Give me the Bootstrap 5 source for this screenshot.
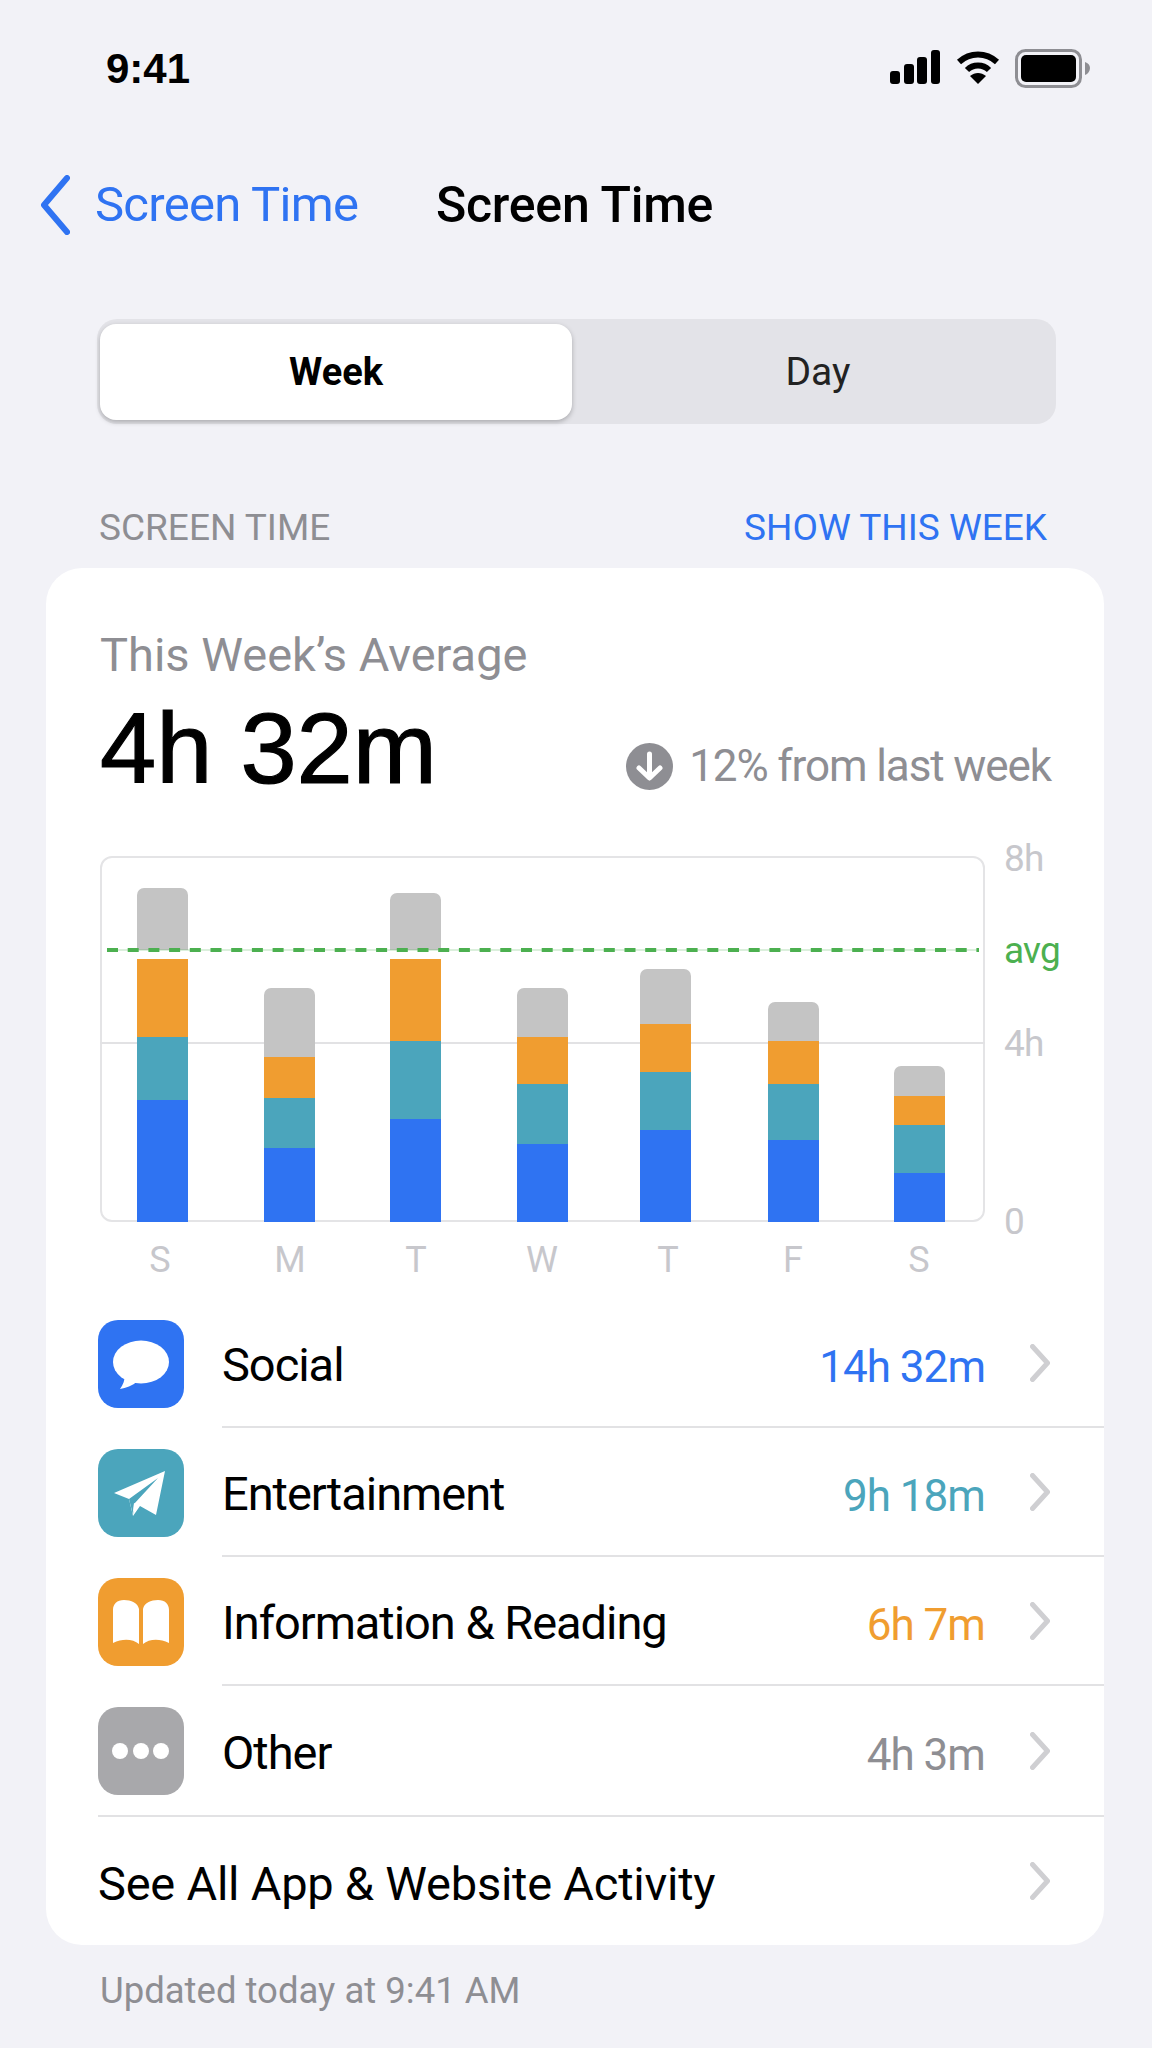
<!DOCTYPE html>
<html lang="en">
<head>
    <meta charset="UTF-8">
    <meta name="viewport" content="width=device-width, initial-scale=1.0">
    <title>Screen Time</title>
    <link href="https://cdn.jsdelivr.net/npm/bootstrap@5.3.0/dist/css/bootstrap.min.css" rel="stylesheet">
    <style>
        body { background: #f2f2f7; font-family: Roboto, "Liberation Sans", sans-serif; color: #000; height: 2048px; overflow: hidden; }
        .status-row { height: 140px; padding: 49px 61px 0 106px; }
        .clock { font-family: "Liberation Sans", sans-serif; font-size: 42px; font-weight: 700; line-height: 40px; }
        .nav-row { height: 130px; padding-left: 40px; }
        .back-text { color: #2f73f2; font-size: 49px; margin-left: 25px; width: 341px; letter-spacing: -.015em; }
        .nav-title { font-size: 50px; font-weight: 500; letter-spacing: -.005em; }
        .seg-box { margin: 49px 96px 0 97px; height: 105px; background: #e3e3e8; border-radius: 20px; padding: 5px 0 4px 3px; }
        .seg-on { width: 472px; background: #fff; border-radius: 16px; box-shadow: 0 2px 5px rgba(0,0,0,.25); font-weight: 700; font-size: 38px; }
        .seg-off { font-size: 39px; color: #222; padding-left: 8px; }
        .sect-head { margin: 73px 105px 0 99px; height: 71px; font-size: 37px; color: #8e8e93; padding-top: 3px; }
        .sect-link { color: #2f73f2; }
        .stat-card { margin: 0 48px 0 46px; height: 1377px; border: 0; border-radius: 36px; overflow: hidden; }
        .avg-label { font-size: 47px; color: #8e8e93; line-height: 54px; margin: 60px 0 0 54px; }
        .avg-row { margin: 11px 53px 0 54px; height: 110px; }
        .avg-num { font-family: "Liberation Sans", sans-serif; font-size: 101px; line-height: 110px; -webkit-text-stroke: 1.2px #000; }
        .delta { font-size: 44px; color: #8e8e93; padding-top: 36px; letter-spacing: -.025em; }
        .chart-wrap { position: relative; margin: 53px 0 0 54px; width: 885px; height: 366px; }
        .plot { position: relative; height: 366px; }
        .plot::before { content: ""; position: absolute; inset: 0; border: 2px solid #e4e4e6; border-radius: 12px; }
        .bar-row { position: relative; z-index: 1; height: 100%; padding-left: 37px; }
        .day-bar { width: 51px; }
        .seg-gray { background: #c4c4c4; border-radius: 7px 7px 0 0; }
        .seg-orange { background: #f09d30; }
        .seg-teal { background: #4ba5bc; }
        .seg-blue { background: #2f73f2; }
        .line-4h { position: absolute; left: 0; right: 0; top: 186px; border-top: 2px solid #e2e2e4; }
        .line-avg { position: absolute; z-index: 2; left: 7px; top: 92px; }
        .axis-tick { position: absolute; left: 904px; font-size: 37px; line-height: 40px; color: #c7c7cc; letter-spacing: -.02em; }
        .axis-avg { color: #4cb050; }
        .days { margin: 18px 0 0 54px; width: 885px; height: 40px; position: relative; }
        .day-name { position: absolute; top: 0; width: 60px; margin-left: -30px; text-align: center; font-size: 36px; line-height: 40px; color: #c7c7cc; }
        .cat-list { margin-top: 19px; }
        .cat-item { padding: 0 0 0 52px; border: 0; height: 129px; background: transparent; color: #000; }
        .cat-icon { width: 86px; height: 88px; border-radius: 20px; flex: none; }
        .cat-body { margin-left: 38px; height: 129px; border-bottom: 2px solid #e2e2e4; padding-right: 54px; font-size: 47px; letter-spacing: -.022em; }
        .cat-nosep { border-bottom: 0; }
        .cat-name { margin-top: 6px; }
        .cat-time { margin: 8px 45px 0 0; font-size: 44px; letter-spacing: -.022em; }
        .all-row { margin-left: 52px; height: 130px; border-top: 2px solid #e2e2e4; padding-right: 54px; font-size: 47px; letter-spacing: -.005em; }
        .foot-note { margin: 24px 0 0 100px; font-size: 36.5px; line-height: 44px; color: #8e8e93; }
        .txt-blue { color: #2f73f2; }
        .txt-teal { color: #4ba5bc; }
        .txt-orange { color: #f09d30; }
        .txt-gray { color: #8e8e93; }
    </style>
</head>
<body>
    <!-- Status bar -->
    <div class="status-row d-flex justify-content-between align-items-start">
        <div class="clock">9:41</div>
        <div class="d-flex" style="gap:15px">
            <svg width="52" height="36" viewBox="0 0 52 36"><rect x="1" y="22" width="10" height="13" rx="3"/><rect x="15" y="15" width="10" height="20" rx="3"/><rect x="28" y="8" width="10" height="27" rx="3"/><rect x="42" y="1" width="9" height="34" rx="3"/></svg>
            <svg width="44" height="36" viewBox="0 0 44 36"><path d="M3 13C14 3 30 3 41 13" fill="none" stroke="#000" stroke-width="6"/><path d="M11 21C17 15 27 15 33 21" fill="none" stroke="#000" stroke-width="6"/><path d="M14 27C19 23 25 23 30 27L22 35Z"/></svg>
            <svg width="76" height="40" viewBox="0 0 76 40"><rect x="1.5" y="1.5" width="64" height="36" rx="9" fill="none" stroke="#8e8e93" stroke-width="3"/><rect x="6" y="6" width="55" height="27" rx="5"/><path d="M70 13c3 1 5 3 5 6s-2 6-5 7z" fill="#8e8e93"/></svg>
        </div>
    </div>

    <!-- Nav -->
    <div class="nav-row d-flex align-items-center">
        <svg width="30" height="60" viewBox="0 0 30 60"><polyline points="27,3 4,30 27,57" fill="none" stroke="#2f73f2" stroke-width="6" stroke-linecap="round" stroke-linejoin="round"/></svg>
        <div class="back-text">Screen Time</div>
        <div class="nav-title">Screen Time</div>
    </div>

    <!-- Week / Day -->
    <div class="seg-box d-flex">
        <div class="seg-on d-flex align-items-center justify-content-center">Week</div>
        <div class="seg-off flex-grow-1 d-flex align-items-center justify-content-center">Day</div>
    </div>

    <div class="sect-head d-flex justify-content-between">
        <span>SCREEN TIME</span>
        <span class="sect-link">SHOW THIS WEEK</span>
    </div>

    <div class="card stat-card">
        <div class="avg-label">This Week’s Average</div>
        <div class="avg-row d-flex justify-content-between align-items-center">
            <div class="avg-num">4h 32m</div>
            <div class="delta d-flex align-items-center gap-3">
                <svg width="47" height="47" viewBox="0 0 47 47"><circle cx="23.5" cy="23.5" r="23.5" fill="#8e8e93"/><path d="M23.5 11V34M13 25l10.5 10L34 25" fill="none" stroke="#fff" stroke-width="5" stroke-linecap="round" stroke-linejoin="round"/></svg>
                <span>12% from last week</span>
            </div>
        </div>

        <!-- Chart -->
        <div class="chart-wrap">
            <div class="plot">
                <div class="line-4h"></div>
                <div class="bar-row d-flex align-items-end">
                    <div class="day-bar"><div class="seg-gray" style="height:62px;margin-bottom:9px"></div><div class="seg-orange" style="height:78px"></div><div class="seg-teal" style="height:63px"></div><div class="seg-blue" style="height:122px"></div></div>
                    <div class="day-bar" style="margin-left:76px"><div class="seg-gray" style="height:69px"></div><div class="seg-orange" style="height:41px"></div><div class="seg-teal" style="height:50px"></div><div class="seg-blue" style="height:74px"></div></div>
                    <div class="day-bar" style="margin-left:75px"><div class="seg-gray" style="height:57px;margin-bottom:9px"></div><div class="seg-orange" style="height:82px"></div><div class="seg-teal" style="height:78px"></div><div class="seg-blue" style="height:103px"></div></div>
                    <div class="day-bar" style="margin-left:76px"><div class="seg-gray" style="height:49px"></div><div class="seg-orange" style="height:47px"></div><div class="seg-teal" style="height:60px"></div><div class="seg-blue" style="height:78px"></div></div>
                    <div class="day-bar" style="margin-left:72px"><div class="seg-gray" style="height:55px"></div><div class="seg-orange" style="height:48px"></div><div class="seg-teal" style="height:58px"></div><div class="seg-blue" style="height:92px"></div></div>
                    <div class="day-bar" style="margin-left:77px"><div class="seg-gray" style="height:39px"></div><div class="seg-orange" style="height:43px"></div><div class="seg-teal" style="height:56px"></div><div class="seg-blue" style="height:82px"></div></div>
                    <div class="day-bar" style="margin-left:75px"><div class="seg-gray" style="height:30px"></div><div class="seg-orange" style="height:29px"></div><div class="seg-teal" style="height:48px"></div><div class="seg-blue" style="height:49px"></div></div>
                </div>
            </div>
            <svg class="line-avg" width="872" height="4"><line x1="0" y1="2" x2="872" y2="2" stroke="#4cb050" stroke-opacity=".2" stroke-width="2"/><line x1="0" y1="2" x2="872" y2="2" stroke="#4cb050" stroke-width="4" stroke-dasharray="11 9.7"/></svg>
            <div class="axis-tick" style="top:-17px">8h</div>
            <div class="axis-tick axis-avg" style="top:75px">avg</div>
            <div class="axis-tick" style="top:168px">4h</div>
            <div class="axis-tick" style="top:346px">0</div>
        </div>
        <div class="days">
            <div class="day-name" style="left:60px">S</div>
            <div class="day-name" style="left:190px">M</div>
            <div class="day-name" style="left:316px">T</div>
            <div class="day-name" style="left:442px">W</div>
            <div class="day-name" style="left:568px">T</div>
            <div class="day-name" style="left:693px">F</div>
            <div class="day-name" style="left:819px">S</div>
        </div>

        <!-- Categories -->
        <div class="list-group list-group-flush cat-list">
            <div class="list-group-item cat-item d-flex align-items-center">
                <svg class="cat-icon" viewBox="0 0 86 88"><rect width="86" height="88" fill="#2f73f2"/><ellipse cx="43" cy="42" rx="28" ry="21.5" fill="#fff"/><path d="M27 54C27 60 25 65 22 69 28 68 34 66 40 61Z" fill="#fff"/></svg>
                <div class="cat-body flex-grow-1 d-flex align-items-center">
                    <span class="cat-name flex-grow-1">Social</span>
                    <span class="cat-time txt-blue">14h 32m</span>
                    <svg width="20" height="38" viewBox="0 0 20 38"><polyline points="2.5,2.5 17.5,19 2.5,35.5" fill="none" stroke="#cfcfd2" stroke-width="5" stroke-linecap="round" stroke-linejoin="round"/></svg>
                </div>
            </div>
            <div class="list-group-item cat-item d-flex align-items-center">
                <svg class="cat-icon" viewBox="0 0 86 88"><rect width="86" height="88" fill="#4ba5bc"/><path d="M67 22 16 44 31 50 35 67 42 57 58 66Z" fill="#fff"/><path d="M31 50 60 29 36 55 35 66Z" fill="#4ba5bc"/><path d="M36 54 41 57 35 63Z" fill="#fff"/></svg>
                <div class="cat-body flex-grow-1 d-flex align-items-center">
                    <span class="cat-name flex-grow-1">Entertainment</span>
                    <span class="cat-time txt-teal">9h 18m</span>
                    <svg width="20" height="38" viewBox="0 0 20 38"><polyline points="2.5,2.5 17.5,19 2.5,35.5" fill="none" stroke="#cfcfd2" stroke-width="5" stroke-linecap="round" stroke-linejoin="round"/></svg>
                </div>
            </div>
            <div class="list-group-item cat-item d-flex align-items-center">
                <svg class="cat-icon" viewBox="0 0 86 88"><rect width="86" height="88" fill="#f09d30"/><path d="M15 32C15 26 19 22 26 22 33 22 40 25 41 31V66C35 61 25 60 15 65Z" fill="#fff"/><path d="M71 32C71 26 67 22 60 22 53 22 46 25 45 31V66C51 61 61 60 71 65Z" fill="#fff"/></svg>
                <div class="cat-body flex-grow-1 d-flex align-items-center">
                    <span class="cat-name flex-grow-1">Information &amp; Reading</span>
                    <span class="cat-time txt-orange">6h 7m</span>
                    <svg width="20" height="38" viewBox="0 0 20 38"><polyline points="2.5,2.5 17.5,19 2.5,35.5" fill="none" stroke="#cfcfd2" stroke-width="5" stroke-linecap="round" stroke-linejoin="round"/></svg>
                </div>
            </div>
            <div class="list-group-item cat-item d-flex align-items-center">
                <svg class="cat-icon" viewBox="0 0 86 88"><rect width="86" height="88" fill="#a8a8ab"/><circle cx="22" cy="44" r="8" fill="#fff"/><circle cx="43" cy="44" r="8" fill="#fff"/><circle cx="63" cy="44" r="8" fill="#fff"/></svg>
                <div class="cat-body cat-nosep flex-grow-1 d-flex align-items-center">
                    <span class="cat-name flex-grow-1">Other</span>
                    <span class="cat-time txt-gray">4h 3m</span>
                    <svg width="20" height="38" viewBox="0 0 20 38"><polyline points="2.5,2.5 17.5,19 2.5,35.5" fill="none" stroke="#cfcfd2" stroke-width="5" stroke-linecap="round" stroke-linejoin="round"/></svg>
                </div>
            </div>
        </div>
        <div class="all-row d-flex align-items-center justify-content-between">
            <span class="cat-name">See All App &amp; Website Activity</span>
            <svg width="20" height="38" viewBox="0 0 20 38"><polyline points="2.5,2.5 17.5,19 2.5,35.5" fill="none" stroke="#cfcfd2" stroke-width="5" stroke-linecap="round" stroke-linejoin="round"/></svg>
        </div>
    </div>

    <div class="foot-note">Updated today at 9:41 AM</div>

    <script src="https://cdn.jsdelivr.net/npm/bootstrap@5.3.0/dist/js/bootstrap.bundle.min.js"></script>
</body>
</html>
